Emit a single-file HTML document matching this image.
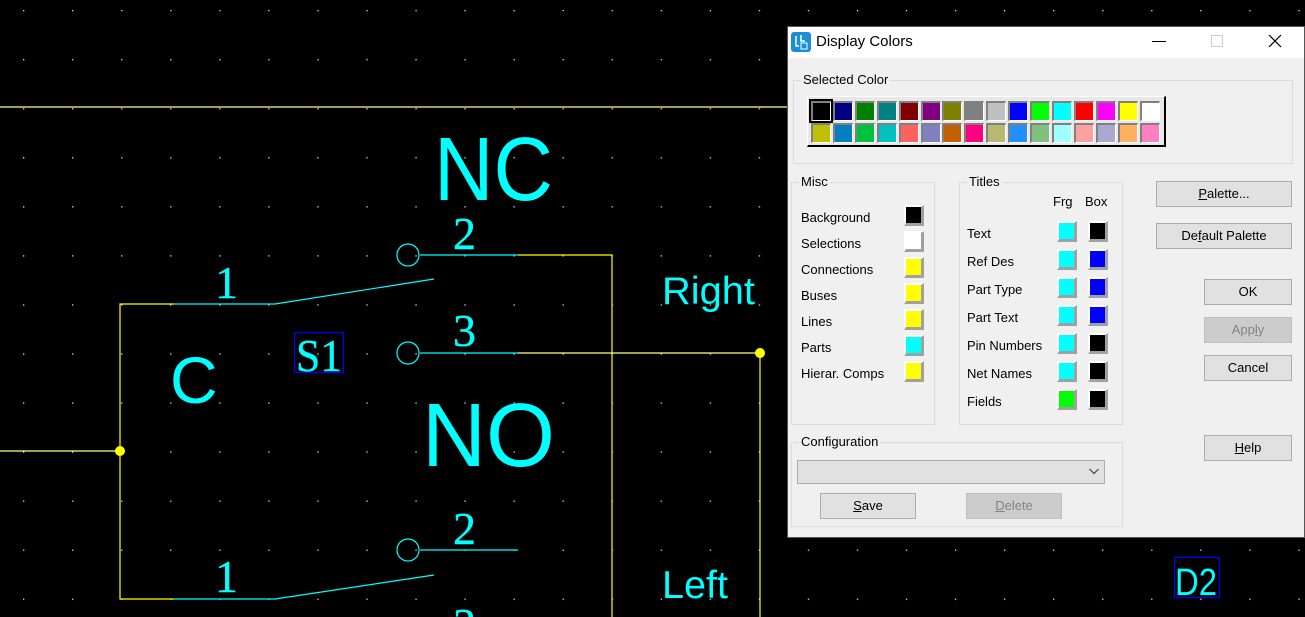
<!DOCTYPE html>
<html><head><meta charset="utf-8"><style>
*{box-sizing:border-box;margin:0;padding:0}
body{width:1305px;height:617px;overflow:hidden;background:#000;position:relative;font-family:"Liberation Sans",sans-serif}
.a{position:absolute}
#dlg{position:absolute;left:787px;top:26px;width:518px;height:512px;background:#f0f0f0;border:1px solid #555;font-size:13px;color:#000}
#tb{position:absolute;left:0;top:0;width:100%;height:31px;background:#fff}
.gb{position:absolute;border:1px solid #dcdcdc}
.gb>span{position:absolute;top:-9px;left:7px;background:#f0f0f0;padding:0 2px;font-size:13px;line-height:16px}
.sw{position:absolute;width:20px;height:21px;border-top:2px solid #fff;border-left:2px solid #fff;border-right:3px solid #a0a0a0;border-bottom:3px solid #a0a0a0}
.ps{position:absolute;width:20px;height:20px;border-top:2px solid #808080;border-left:2px solid #808080;border-right:1px solid #fff;border-bottom:1px solid #fff}
.btn{position:absolute;background:#e1e1e1;border:1px solid #adadad;text-align:center;line-height:23px;font-size:13px}
.dis{background:#cccccc;border-color:#bfbfbf;color:#838383}
.lb{position:absolute;font-size:13px;line-height:16px}
</style></head><body>
<svg class="a" style="left:0;top:0" width="1305" height="617">
<defs><pattern id="g" x="23" y="10" width="49.05" height="49.05" patternUnits="userSpaceOnUse"><rect x="0" y="0" width="1.3" height="1.3" fill="#ddd"/></pattern></defs>
<rect width="1305" height="617" fill="url(#g)"/>
<g stroke-width="1.2" fill="none">
<line x1="0" y1="107" x2="787" y2="107" stroke="#ffff80"/>
<line x1="0" y1="451" x2="120" y2="451" stroke="#ffff80"/>
<polyline points="174,304 120,304 120,599 174,599" stroke="#ffff00"/>
<polyline points="518,255 612,255 612,617" stroke="#ffff00"/>
<polyline points="518,353 760,353" stroke="#ffff80"/>
<line x1="760" y1="353" x2="760" y2="617" stroke="#ffff00"/>
<g stroke="#00ffff">
<polyline points="174,304 275,304 434,279"/>
<polyline points="174,599 275,599 434,575"/>
<circle cx="408" cy="255" r="11"/><circle cx="408" cy="353" r="11"/><circle cx="408" cy="550" r="11"/>
<line x1="420" y1="255" x2="518" y2="255"/><line x1="420" y1="353" x2="518" y2="353"/><line x1="420" y1="550" x2="518" y2="550"/>
</g>
<rect x="294.5" y="332.5" width="49" height="40" stroke="#0000ff"/>
<rect x="1174.5" y="557.5" width="45" height="40" stroke="#0000ff"/>
</g>
<circle cx="120" cy="451" r="5" fill="#ffff00"/><circle cx="760" cy="353" r="5" fill="#ffff00"/>
<g fill="#00ffff" font-family="Liberation Sans, sans-serif">
<text x="434" y="200" font-size="90" textLength="119" lengthAdjust="spacingAndGlyphs">NC</text>
<text x="422" y="466" font-size="90" textLength="133" lengthAdjust="spacingAndGlyphs">NO</text>
<text x="170" y="403" font-size="66">C</text>
<text x="662" y="304" font-size="39" textLength="93" lengthAdjust="spacingAndGlyphs">Right</text>
<text x="662" y="598" font-size="39" textLength="66" lengthAdjust="spacingAndGlyphs">Left</text>
<text x="1175" y="595" font-size="38" textLength="42" lengthAdjust="spacingAndGlyphs">D2</text>
</g>
<g fill="#00ffff" stroke="#00ffff" stroke-width="0.4" font-family="Liberation Serif, serif" font-size="46">
<text x="453" y="249">2</text><text x="453" y="346">3</text><text x="453" y="544">2</text><text x="453" y="640">3</text>
<text x="215" y="298">1</text><text x="215" y="592">1</text>
<text x="296" y="371" textLength="46" lengthAdjust="spacingAndGlyphs">S1</text>
</g>
</svg>
<div id="dlg">
<div id="tb">
<svg class="a" style="left:3px;top:5px" width="20" height="20"><rect width="20" height="20" rx="3" fill="#1a8fd8"/><path d="M5 4v10h3M10 3v6h4" stroke="#fff" stroke-width="1.5" fill="none"/><rect x="10" y="11" width="6" height="6" fill="none" stroke="#fff"/></svg>
<div class="lb" style="left:28px;top:7px;font-size:15px">Display Colors</div>
<div class="a" style="left:364px;top:14px;width:14px;height:1px;background:#000"></div>
<div class="a" style="left:423px;top:8px;width:12px;height:12px;border:1px solid #ccc"></div>
<svg class="a" style="left:480px;top:7px" width="14" height="14"><path d="M1 1L13 13M13 1L1 13" stroke="#000" stroke-width="1.2"/></svg>
</div>
<div class="gb" style="left:5px;top:53px;width:500px;height:84px"><span>Selected Color</span></div>
<div class="a" style="left:19px;top:69px;width:359px;height:51px;background:#e8e8e8;border-top:1px solid #fff;border-left:1px solid #fff;border-right:2px solid #000;border-bottom:2px solid #000"></div>
<div id="pal"></div>
<div class="gb" style="left:3px;top:155px;width:144px;height:243px"><span>Misc</span></div>
<div class="gb" style="left:171px;top:155px;width:164px;height:243px"><span>Titles</span></div>
<div class="gb" style="left:3px;top:415px;width:332px;height:85px"><span>Configuration</span></div>
<div class="lb" style="left:13px;top:183px">Background</div>
<div class="lb" style="left:13px;top:209px">Selections</div>
<div class="lb" style="left:13px;top:235px">Connections</div>
<div class="lb" style="left:13px;top:261px">Buses</div>
<div class="lb" style="left:13px;top:287px">Lines</div>
<div class="lb" style="left:13px;top:313px">Parts</div>
<div class="lb" style="left:13px;top:339px">Hierar. Comps</div>
<div class="sw" style="left:116px;top:178px;background:#000"></div>
<div class="sw" style="left:116px;top:204px;background:#fff"></div>
<div class="sw" style="left:116px;top:230px;background:#ff0"></div>
<div class="sw" style="left:116px;top:256px;background:#ff0"></div>
<div class="sw" style="left:116px;top:282px;background:#ff0"></div>
<div class="sw" style="left:116px;top:308px;background:#0ff"></div>
<div class="sw" style="left:116px;top:334px;background:#ff0"></div>
<div class="lb" style="left:265px;top:167px">Frg</div><div class="lb" style="left:297px;top:167px">Box</div>
<div class="lb" style="left:179px;top:199px">Text</div>
<div class="lb" style="left:179px;top:227px">Ref Des</div>
<div class="lb" style="left:179px;top:255px">Part Type</div>
<div class="lb" style="left:179px;top:283px">Part Text</div>
<div class="lb" style="left:179px;top:311px">Pin Numbers</div>
<div class="lb" style="left:179px;top:339px">Net Names</div>
<div class="lb" style="left:179px;top:367px">Fields</div>
<div id="tsw"></div>
<div class="btn" style="left:368px;top:154px;width:136px;height:26px"><u>P</u>alette...</div>
<div class="btn" style="left:368px;top:196px;width:136px;height:26px">De<u>f</u>ault Palette</div>
<div class="btn" style="left:416px;top:252px;width:88px;height:26px">OK</div>
<div class="btn dis" style="left:416px;top:290px;width:88px;height:26px">App<u>l</u>y</div>
<div class="btn" style="left:416px;top:328px;width:88px;height:26px">Cancel</div>
<div class="btn" style="left:416px;top:408px;width:88px;height:26px"><u>H</u>elp</div>
<div class="a" style="left:9px;top:433px;width:308px;height:24px;background:#e1e1e1;border:1px solid #adadad"></div>
<svg class="a" style="left:301px;top:441px" width="10" height="7"><path d="M0.5 1L5 5.5L9.5 1" stroke="#333" fill="none"/></svg>
<div class="btn" style="left:32px;top:466px;width:96px;height:26px"><u>S</u>ave</div>
<div class="btn dis" style="left:178px;top:466px;width:96px;height:26px"><u>D</u>elete</div>
</div>
<script>
var r1=["#000","#000080","#008000","#008080","#800000","#800080","#808000","#808080","#c0c0c0","#0000ff","#00ff00","#00ffff","#ff0000","#ff00ff","#ffff00","#ffffff"];
var r2=["#c0c000","#0080c0","#00c040","#00c0c0","#ff6060","#8080c0","#c06000","#ff0080","#b8b870","#2090ff","#80c080","#a0ffff","#ffa0a0","#a8a8d0","#ffb060","#ff80c0"];
var h="";
for(var i=0;i<16;i++){var x=23+i*21.9;
h+='<div class="ps" style="left:'+x+'px;top:74px;background:'+r1[i]+'"></div>';
h+='<div class="ps" style="left:'+x+'px;top:96px;background:'+r2[i]+'"></div>';}
h+='<div class="a" style="left:21px;top:72px;width:24px;height:24px;border:2px solid #000"></div>';
document.getElementById("pal").innerHTML=h;
var f=["#0ff","#0ff","#0ff","#0ff","#0ff","#0ff","#0f0"],b=["#000","#00f","#00f","#00f","#000","#000","#000"],t="";
for(var j=0;j<7;j++){var y=194+j*28;
t+='<div class="sw" style="left:269px;top:'+y+'px;background:'+f[j]+'"></div>';
t+='<div class="sw" style="left:300px;top:'+y+'px;background:'+b[j]+'"></div>';}
document.getElementById("tsw").innerHTML=t;
</script>
</body></html>
